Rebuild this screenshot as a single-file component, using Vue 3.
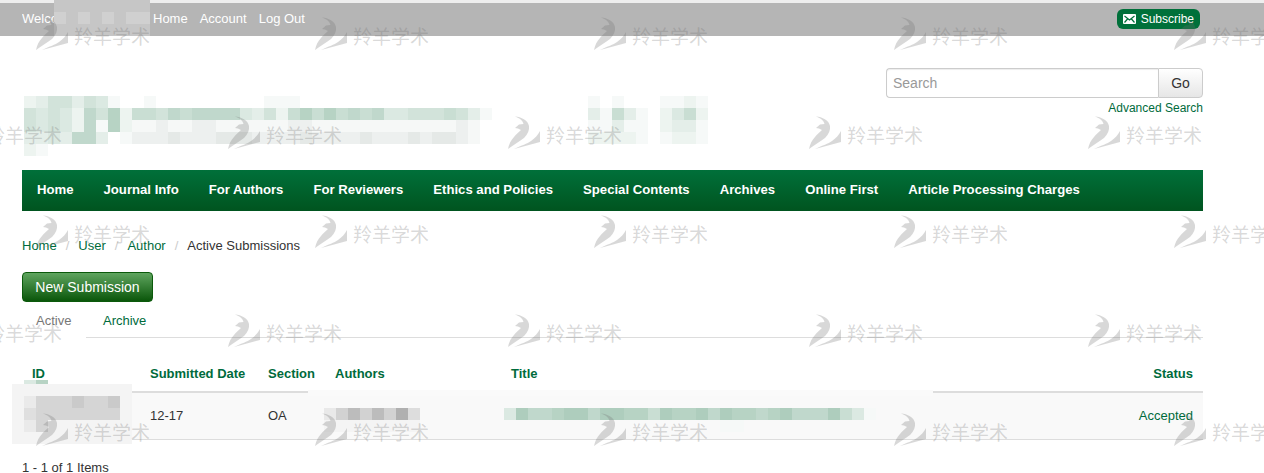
<script setup>
const navItems = ['Home', 'Journal Info', 'For Authors', 'For Reviewers', 'Ethics and Policies', 'Special Contents', 'Archives', 'Online First', 'Article Processing Charges']

// blurred-out regions: each digit is how far a 12px cell goes from white to the tint
const mosaics = [
  { x: 54, y: 0, tint: '#aaaaaa', rows: ['66666666', '56565655', '66666666'] },
  {
    x: 24, y: 96, tint: '#aecdbd',
    rows: [
      '235535410010000000001110000000',
      '545427582665767777435268686767445556531',
      '545427182',
      '334377301',
      '21'
    ]
  },
  { x: 132, y: 120, tint: '#b0bdb8', rows: ['112112211111122111111111111210', '222322233322223222232223233210'] },
  { x: 588, y: 96, tint: '#aecdbd', rows: ['1010001121', '3163102462', '1131102331', '2222101221'] },
  { x: 24, y: 380, h: 4, tint: '#aecdbd', rows: ['48'] },
  { x: 12, y: 384, tint: '#a0a0a0', rows: ['1111111111', '1244454451', '1344444441', '1241111111', '1111111111'] },
  { x: 324, y: 408, tint: '#9a9a9a', rows: ['2464647300'] },
  { x: 324, y: 420, tint: '#9a9a9a', rows: ['1111111100'] },
  { x: 504, y: 408, tint: '#aecdbd', rows: ['49778997998869889798878977796410'] },
  { x: 720, y: 420, tint: '#aecdbd', rows: ['11'] }
]

const mix = (tint, level) => {
  const k = level / 9
  const part = (i) => Math.round(255 - (255 - parseInt(tint.slice(i, i + 2), 16)) * k)
  return `rgb(${part(1)},${part(3)},${part(5)})`
}

const cells = mosaics.flatMap((m) =>
  m.rows.flatMap((row, r) =>
    [...row].map((d, c) => ({
      x: m.x + c * 12,
      y: m.y + r * (m.h || 12),
      h: m.h || 12,
      fill: mix(m.tint, +d)
    }))
  ).filter((cell) => cell.fill !== 'rgb(255,255,255)')
)

const oddX = [35, 314, 593, 893, 1173]
const evenX = [-53, 227, 507, 808, 1087]
const wmRows = [
  { y: 17, xs: oddX },
  { y: 116, xs: evenX },
  { y: 215, xs: oddX },
  { y: 314, xs: evenX },
  { y: 413, xs: oddX }
]
const marks = wmRows.flatMap((r) => r.xs.map((x) => ({ x, y: r.y })))
</script>

<template>
  <div class="page">
    <div class="topbar">
      <div class="topbar-left">
        <span class="who">Welcome, Author</span>
        <a>Home</a>
        <a>Account</a>
        <a>Log Out</a>
      </div>
      <a class="subscribe">
        <svg width="13" height="10" viewBox="0 0 13 10">
          <rect width="13" height="10" rx="1" fill="#fff" />
          <path d="M1.500 2 6.500 6 11.500 2M1.500 8.500 4.500 5M11.500 8.500 8.500 5" fill="none" stroke="#00703a" stroke-width="1.200" />
        </svg>
        Subscribe
      </a>
    </div>

    <div class="wrap">
      <div class="head">
        <div class="search">
          <input class="search-input" type="text" placeholder="Search" />
          <button class="go">Go</button>
        </div>
        <a class="adv">Advanced Search</a>
      </div>

      <nav class="mainnav">
        <a v-for="item in navItems" :key="item">{{ item }}</a>
      </nav>

      <div class="crumbs">
        <a>Home</a><i>/</i><a>User</a><i>/</i><a>Author</a><i>/</i><span>Active Submissions</span>
      </div>

      <button class="new-btn">New Submission</button>

      <div class="tabs">
        <a class="tab active">Active</a>
        <a class="tab">Archive</a>
      </div>

      <table class="subs">
        <colgroup>
          <col style="width: 118px" />
          <col style="width: 118px" />
          <col style="width: 67px" />
          <col style="width: 176px" />
          <col />
          <col style="width: 100px" />
        </colgroup>
        <thead>
          <tr>
            <th>ID</th>
            <th>Submitted Date</th>
            <th>Section</th>
            <th>Authors</th>
            <th>Title</th>
            <th class="right">Status</th>
          </tr>
        </thead>
        <tbody>
          <tr>
            <td></td>
            <td>12-17</td>
            <td>OA</td>
            <td></td>
            <td></td>
            <td class="right"><a>Accepted</a></td>
          </tr>
        </tbody>
      </table>

      <div class="count">1 - 1 of 1 Items</div>
    </div>

    <div class="overlay">
      <div class="line-cover"></div>
      <svg class="blur" width="1264" height="473" shape-rendering="crispEdges">
        <rect v-for="(c, i) in cells" :key="i" :x="c.x" :y="c.y" width="12" :height="c.h" :fill="c.fill" />
      </svg>
      <div v-for="(m, i) in marks" :key="i" class="mark" :style="{ left: m.x + 'px', top: m.y + 'px' }">
        <svg width="34" height="33" viewBox="0 0 34 33">
          <path d="M8 .5C14 1 21 4 22 10C22.500 14 21 18 17 22C12 26 6 29 1 33C2 28 4 24 7 21C9 18 12 16 14 14L11 12.500L8 12L12 8.500L16.500 8C16 5 13 2 8 .5Z" />
          <path d="M33 15L33 26L7 33C15 29 20 28 24 25C28 22 31 19 33 15Z" />
        </svg>
        <span>羚羊学术</span>
      </div>
    </div>
  </div>
</template>

<style>
html, body {
  overflow: hidden;
  background: #fff;
}
</style>

<style scoped>
.page {
  position: relative;
  height: 473px;
  overflow: hidden;
  font-family: "Liberation Sans", Arial, sans-serif;
  font-size: 13px;
  line-height: 20px;
  color: #333;
}

a {
  color: #006b3c;
}

.topbar {
  height: 33px;
  border-top: 3px solid #eee;
  background: #b5b5b5;
  padding: 0 64px 0 22px;
  display: flex;
  align-items: flex-start;
  justify-content: space-between;
}

.topbar-left {
  display: flex;
  gap: 12px;
  padding-top: 6px;
  color: #fff;
}

.topbar-left a {
  color: #fff;
}

.who {
  width: 119px;
  overflow: hidden;
  white-space: nowrap;
}

.subscribe {
  margin-top: 6px;
  height: 20px;
  padding: 0 6px;
  display: flex;
  align-items: center;
  gap: 5px;
  background: #00703a;
  border-radius: 6px;
  color: #fff;
  font-size: 12px;
}

.wrap {
  margin: 0 61px 0 22px;
}

.head {
  height: 134px;
  padding-top: 32px;
  box-sizing: border-box;
  display: flex;
  flex-direction: column;
  align-items: flex-end;
}

.search {
  display: flex;
  height: 30px;
}

.search-input {
  width: 272px;
  box-sizing: border-box;
  border: 1px solid #ccc;
  border-right: none;
  border-radius: 4px 0 0 4px;
  padding: 0 6px;
  font: 14px "Liberation Sans", Arial, sans-serif;
  color: #555;
  outline: none;
  box-shadow: inset 0 1px 1px rgba(0, 0, 0, 0.075);
}

.search-input::placeholder {
  color: #999;
}

.go {
  width: 45px;
  border: 1px solid #ccc;
  border-radius: 0 4px 4px 0;
  background: linear-gradient(#fff, #e6e6e6);
  color: #333;
  font: 14px "Liberation Sans", Arial, sans-serif;
  padding: 0;
}

.adv {
  font-size: 12px;
  line-height: 18px;
  margin-top: 1px;
}

.mainnav {
  height: 41px;
  padding-bottom: 2px;
  box-sizing: border-box;
  display: flex;
  align-items: center;
  background: linear-gradient(#00703a, #00541f);
}

.mainnav a {
  padding: 0 15px;
  color: #fff;
  font-size: 13.150px;
  font-weight: bold;
  white-space: nowrap;
}

.crumbs {
  margin-top: 25px;
  display: flex;
}

.crumbs i {
  font-style: normal;
  color: #ccc;
  padding: 0 9px;
}

.new-btn {
  display: block;
  margin-top: 16px;
  width: 131px;
  height: 30px;
  padding: 0;
  border: 1px solid #0b5a0b;
  border-radius: 4px;
  background: linear-gradient(#5fa55f, #0a560a);
  color: #fff;
  font: 14px "Liberation Sans", Arial, sans-serif;
}

.tabs {
  display: flex;
  height: 34px;
  margin-top: 1px;
  border-bottom: 1px solid #ddd;
}

.tab {
  padding: 8px 15px 0;
  margin-right: 2px;
}

.tab.active {
  width: 64px;
  box-sizing: border-box;
  padding: 8px 14px 0;
  color: #777;
  background: #fff;
  height: 35px;
  margin-bottom: -1px;
  position: relative;
}

.subs {
  margin-top: 18px;
  width: 100%;
  border-collapse: collapse;
  table-layout: fixed;
}

.subs th {
  padding: 8px 10px 7px;
  text-align: left;
  color: #006b3c;
  border-bottom: 2px solid #ddd;
}

.subs td {
  height: 47px;
  box-sizing: border-box;
  padding: 0 10px;
  background: #f9f9f9;
  border-bottom: 1px solid #ddd;
}

.subs .right {
  text-align: right;
}

.count {
  margin-top: 18px;
}

.overlay {
  position: absolute;
  inset: 0;
  pointer-events: none;
}

.blur {
  position: absolute;
  left: 0;
  top: 0;
}

.line-cover {
  position: absolute;
  left: 308px;
  top: 390px;
  width: 625px;
  height: 6px;
  background: #fafafa;
}

.mark {
  position: absolute;
  display: flex;
  align-items: center;
  gap: 5px;
  color: rgba(110, 110, 110, 0.27);
  font-family: "Noto Sans CJK SC", sans-serif;
  font-size: 19px;
  line-height: 32px;
  white-space: nowrap;
}

.mark svg {
  fill: rgba(110, 110, 110, 0.27);
  flex: none;
}

.mark span {
  position: relative;
  top: 2px;
}
</style>
